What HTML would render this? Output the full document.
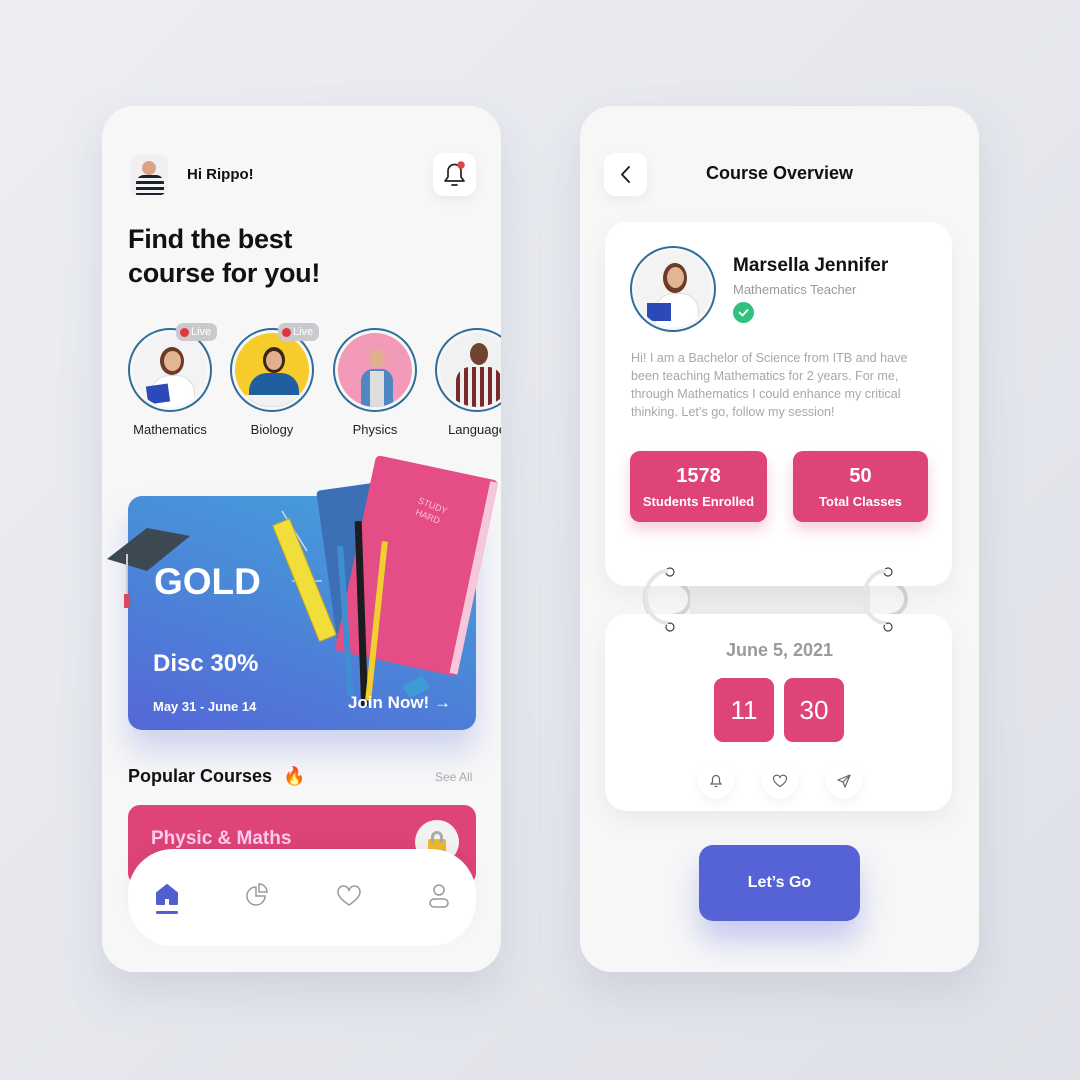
<!DOCTYPE html>
<html><head><meta charset="utf-8"><style>
*{margin:0;padding:0;box-sizing:border-box}
body{width:1080px;height:1080px;background:linear-gradient(135deg,#eceef3,#dfe1e8);font-family:"Liberation Sans",sans-serif;position:relative;overflow:hidden;color:#111}
.abs{position:absolute}
.phone{position:absolute;top:106px;width:399px;height:866px;background:#f7f7f8;border-radius:32px;box-shadow:0 20px 40px rgba(150,155,175,.25);overflow:hidden}
.circ{position:absolute;width:84px;height:84px;border-radius:50%;border:2px solid #2f6e9a;padding:3px;background:#f7f7f8}
.circ .in{width:100%;height:100%;border-radius:50%;overflow:hidden;position:relative}
.lbl{position:absolute;font-size:13px;color:#222;text-align:center;width:100px}
.live{position:absolute;background:#c9cacd;color:#fff;font-size:11px;border-radius:7px;padding:3px 6px 3px 4px;display:flex;align-items:center;gap:2px}
.live i{width:9px;height:9px;border-radius:50%;background:#e2363f;display:inline-block}
.stat{position:absolute;background:#de4478;border-radius:10px;color:#fff;text-align:center;box-shadow:0 8px 14px rgba(222,68,120,.25)}
.stat b{display:block;font-size:20px;margin-top:14px}
.stat span{font-size:13px;font-weight:bold;display:block;margin-top:6px}
.tbox{position:absolute;width:60px;height:64px;background:#de4478;border-radius:9px;color:#fff;font-size:26px;text-align:center;line-height:64px}
.ib{position:absolute;width:36px;height:36px;border-radius:50%;background:#fff;box-shadow:0 4px 10px rgba(0,0,0,.05);display:flex;align-items:center;justify-content:center}
</style></head><body>

<!-- LEFT PHONE -->
<div class="phone" style="left:102px">
  <div class="abs" style="left:28px;top:49px;width:38px;height:40px;border-radius:8px;background:#f0f0f2;overflow:hidden">
    <div class="abs" style="left:12px;top:6px;width:14px;height:14px;border-radius:50%;background:#d9a584"></div>
    <div class="abs" style="left:6px;top:20px;width:28px;height:20px;border-radius:8px 8px 0 0;background:repeating-linear-gradient(#1e2230 0 3px,#f4f4f4 3px 6px)"></div>
  </div>
  <div class="abs" style="left:85px;top:60px;font-size:15px;font-weight:bold">Hi Rippo!</div>
  <div class="abs" style="left:331px;top:47px;width:43px;height:43px;border-radius:11px;background:#fff;box-shadow:0 4px 12px rgba(0,0,0,.06)">
    <svg width="43" height="43" viewBox="0 0 43 43"><path d="M12 28h19l-3-4v-6a6.5 6.5 0 0 0-13 0v6z" fill="none" stroke="#222" stroke-width="1.7" stroke-linejoin="round"/><path d="M19 32h5" stroke="#222" stroke-width="1.7" stroke-linecap="round"/><circle cx="28" cy="12" r="3.8" fill="#e2434b"/></svg>
  </div>
  <div class="abs" style="left:26px;top:116px;font-size:27px;font-weight:bold;line-height:34px;letter-spacing:-.3px">Find the best<br>course for you!</div>

  <div class="circ" style="left:26px;top:222px"><div class="in" style="background:#f3f3f3"><div class="abs" style="left:27px;top:14px;width:24px;height:28px;border-radius:50%;background:#6b3b25"></div><div class="abs" style="left:31px;top:18px;width:17px;height:20px;border-radius:50%;background:#e3b595"></div><div class="abs" style="left:18px;top:42px;width:44px;height:40px;border-radius:18px 18px 0 0;background:#fff;box-shadow:inset 0 0 0 1px #ddd"></div><div class="abs" style="left:14px;top:52px;width:22px;height:18px;background:#2c49b8;transform:rotate(-8deg)"></div></div></div>
  <div class="live" style="left:74px;top:217px"><i></i>Live</div>
  <div class="lbl" style="left:18px;top:316px">Mathematics</div>

  <div class="circ" style="left:128px;top:222px"><div class="in" style="background:#f5cc2c"><div class="abs" style="left:28px;top:14px;width:22px;height:26px;border-radius:50%;background:#3b2418"></div><div class="abs" style="left:31px;top:18px;width:16px;height:19px;border-radius:50%;background:#e2b08e"></div><div class="abs" style="left:14px;top:40px;width:50px;height:40px;border-radius:18px 18px 0 0;background:#1f5fa0"></div><div class="abs" style="left:0;top:62px;width:80px;height:20px;background:#f1f1f1"></div></div></div>
  <div class="live" style="left:176px;top:217px"><i></i>Live</div>
  <div class="lbl" style="left:120px;top:316px">Biology</div>

  <div class="circ" style="left:231px;top:222px"><div class="in" style="background:#f39ab8"><div class="abs" style="left:31px;top:16px;width:16px;height:19px;border-radius:50%;background:#e0b091"></div><div class="abs" style="left:23px;top:36px;width:32px;height:44px;border-radius:12px 12px 0 0;background:#4f86c4"></div><div class="abs" style="left:32px;top:38px;width:14px;height:40px;background:#ddd"></div></div></div>
  <div class="lbl" style="left:223px;top:316px">Physics</div>

  <div class="circ" style="left:333px;top:222px"><div class="in" style="background:#f1f1f1"><div class="abs" style="left:30px;top:10px;width:18px;height:22px;border-radius:50%;background:#6e4330"></div><div class="abs" style="left:16px;top:34px;width:46px;height:46px;border-radius:14px 14px 0 0;background:repeating-linear-gradient(90deg,#7a2a2a 0 4px,#eee 4px 8px)"></div></div></div>
  <div class="lbl" style="left:325px;top:316px">Language</div>

  <!-- banner -->
  <div class="abs" style="left:26px;top:390px;width:348px;height:234px;border-radius:14px;background:linear-gradient(20deg,#5567d8 0%,#4a8ad8 55%,#44a3dd 100%);box-shadow:0 22px 30px rgba(90,110,210,.25)"></div>
  <svg class="abs" style="left:0;top:350px" width="399" height="330" viewBox="0 0 399 330">
    <path d="M180 55 L205 95 M240 50 L232 110 M190 125 h30" stroke="#cfe3f7" stroke-width="1.3" fill="none"/>
    <rect x="225" y="30" width="60" height="160" rx="4" fill="#3d6fb5" transform="rotate(-8 255 110)"/>
    <g transform="rotate(12 315 120)"><rect x="250" y="10" width="125" height="200" rx="5" fill="#e44d85"/><rect x="367" y="12" width="8" height="196" fill="#f4c8d8"/><text x="300" y="50" font-size="9" fill="#f7c3d6" font-family="Liberation Sans" transform="rotate(10 310 50)">STUDY</text><text x="300" y="62" font-size="9" fill="#f7c3d6" font-family="Liberation Sans" transform="rotate(10 310 62)">HARD</text></g>
    <g transform="rotate(-22 210 140)"><rect x="200" y="60" width="18" height="125" fill="#f2de3a" stroke="#c9a81c"/></g>
    <rect x="240" y="90" width="6" height="150" fill="#3f8fd0" transform="rotate(-4 243 160)"/>
    <rect x="256" y="65" width="7" height="185" fill="#1c1c1c" transform="rotate(-2 260 160)"/>
    <rect x="272" y="85" width="6" height="160" fill="#f2cf2e" transform="rotate(6 275 160)"/>
    <path d="M300 230 l20 -10 l8 12 l-20 10z" fill="#3f9bd4"/>
    <path d="M5 103 L45 72 L88 80 L45 115 Z" fill="#3c4852"/>
    <path d="M25 98 L25 140" stroke="#ccc" stroke-width="2"/><rect x="22" y="138" width="6" height="14" fill="#d94a5f"/>
  </svg>
  <div class="abs" style="left:52px;top:455px;font-size:37px;font-weight:bold;color:#fff">GOLD</div>
  <div class="abs" style="left:51px;top:544px;font-size:24px;font-weight:bold;color:#fff">Disc 30%</div>
  <div class="abs" style="left:51px;top:593px;font-size:13px;font-weight:bold;color:#fff">May 31 - June 14</div>
  <div class="abs" style="left:246px;top:587px;font-size:17px;font-weight:bold;color:#fff">Join Now! →</div>

  <div class="abs" style="left:26px;top:660px;font-size:18px;font-weight:bold">Popular Courses <span style="margin-left:6px">🔥</span></div>
  <div class="abs" style="left:333px;top:664px;font-size:12px;color:#aaa">See All</div>
  <div class="abs" style="left:26px;top:699px;width:348px;height:80px;border-radius:12px;background:#de4478"></div>
  <div class="abs" style="left:49px;top:722px;font-size:19px;font-weight:bold;color:#fce">Physic &amp; Maths</div>
  <div class="abs" style="left:313px;top:714px;width:44px;height:44px;border-radius:50%;background:#f3f3f3"><div class="abs" style="left:13px;top:19px;width:18px;height:14px;background:#f0b92e;border-radius:2px"></div><div class="abs" style="left:16px;top:11px;width:12px;height:12px;border:3px solid #aaa;border-bottom:none;border-radius:6px 6px 0 0"></div></div>
  <div class="abs" style="left:26px;top:743px;width:348px;height:97px;border-radius:45px;background:#fff;box-shadow:0 -6px 16px rgba(0,0,0,.04)">
    <svg class="abs" style="left:26px;top:33px" width="26" height="32" viewBox="0 0 26 32"><path d="M3 11 L13 3 L23 11 V22 H16 V16 H10 V22 H3Z" fill="#4f5fcf" stroke="#4f5fcf" stroke-width="2" stroke-linejoin="round"/><rect x="2" y="29" width="22" height="3" rx="1.5" fill="#4f5fcf"/></svg>
    <svg class="abs" style="left:117px;top:33px" width="26" height="26" viewBox="0 0 26 26" fill="none" stroke="#999" stroke-width="1.5"><path d="M11 5a9 9 0 1 0 9 9h-9z"/><path d="M14 2a8 8 0 0 1 8 8h-8z"/></svg>
    <svg class="abs" style="left:208px;top:35px" width="26" height="24" viewBox="0 0 26 24" fill="none" stroke="#999" stroke-width="1.5"><path d="M13 21C4 15 2 11 2 8a5.5 5.5 0 0 1 11-1 5.5 5.5 0 0 1 11 1c0 3-2 7-11 13z"/></svg>
    <svg class="abs" style="left:299px;top:33px" width="24" height="28" viewBox="0 0 24 28" fill="none" stroke="#999" stroke-width="1.5"><circle cx="12" cy="8" r="5"/><rect x="3" y="17" width="18" height="8" rx="4"/></svg>
  </div>
</div>

<!-- RIGHT PHONE -->
<div class="phone" style="left:580px">
  <div class="abs" style="left:24px;top:47px;width:43px;height:43px;border-radius:11px;background:#fff;box-shadow:0 4px 12px rgba(0,0,0,.05)">
    <svg width="43" height="43"><path d="M25 14 L18 21.5 L25 29" fill="none" stroke="#222" stroke-width="2" stroke-linecap="round" stroke-linejoin="round"/></svg>
  </div>
  <div class="abs" style="left:0;top:57px;width:399px;text-align:center;font-size:18px;font-weight:bold">Course Overview</div>

  <!-- rings -->
  <svg class="abs" style="left:50px;top:455px" width="300" height="75" viewBox="0 0 300 75" fill="none"><path d="M40 10 a24 26 0 0 0 0 54" stroke="#ddd" stroke-width="4"/><path d="M44 22 a14 14 0 0 1 0 32" stroke="#d5d5d8" stroke-width="4"/><path d="M256 10 a24 26 0 0 0 0 54" stroke="#ddd" stroke-width="4"/><path d="M260 22 a14 14 0 0 1 0 32" stroke="#d5d5d8" stroke-width="4"/><rect x="60" y="20" width="180" height="34" fill="#ececee"/></svg>

  <div class="abs" style="left:25px;top:116px;width:347px;height:364px;border-radius:22px;background:#fff;box-shadow:0 10px 24px rgba(0,0,0,.05)"></div>
  <div class="circ" style="left:50px;top:140px;width:86px;height:86px"><div class="in" style="background:#f3f3f3"><div class="abs" style="left:28px;top:12px;width:24px;height:30px;border-radius:50%;background:#6b3b25"></div><div class="abs" style="left:32px;top:16px;width:17px;height:21px;border-radius:50%;background:#e3b595"></div><div class="abs" style="left:20px;top:42px;width:44px;height:40px;border-radius:18px 18px 0 0;background:#fff;box-shadow:inset 0 0 0 1px #ddd"></div><div class="abs" style="left:12px;top:52px;width:24px;height:18px;background:#2c49b8"></div></div></div>
  <div class="abs" style="left:153px;top:149px;font-size:19px;font-weight:bold">Marsella Jennifer</div>
  <div class="abs" style="left:153px;top:176px;font-size:13px;color:#999">Mathematics Teacher</div>
  <div class="abs" style="left:153px;top:196px;width:21px;height:21px;border-radius:50%;background:#2ec27e"><svg width="21" height="21"><path d="M6.5 10.5l3 3 5-5.5" stroke="#fff" stroke-width="1.8" fill="none" stroke-linecap="round"/></svg></div>
  <div class="abs" style="left:51px;top:243px;width:300px;font-size:12.6px;color:#a8a8ab;line-height:18px">Hi! I am a Bachelor of Science from ITB and have been teaching Mathematics for 2 years. For me, through Mathematics I could enhance my critical thinking. Let’s go, follow my session!</div>
  <div class="stat" style="left:50px;top:345px;width:137px;height:71px"><b>1578</b><span>Students Enrolled</span></div>
  <div class="stat" style="left:213px;top:345px;width:135px;height:71px"><b>50</b><span>Total Classes</span></div>

  <div class="abs" style="left:25px;top:508px;width:347px;height:197px;border-radius:22px;background:#fff;box-shadow:0 10px 24px rgba(0,0,0,.05)"></div>
  <svg class="abs" style="left:80px;top:460px" width="240" height="70" fill="none" stroke="#444" stroke-width="1.2"><circle cx="10" cy="6" r="4"/><circle cx="10" cy="61" r="4"/><circle cx="228" cy="6" r="4"/><circle cx="228" cy="61" r="4"/></svg>
  <svg class="abs" style="left:58px;top:455px" width="290" height="70" fill="none" stroke="#e6e6e8" stroke-width="4"><path d="M30 10 a22 26 0 0 0 0 52"/><path d="M248 10 a22 26 0 0 0 0 52"/></svg>
  <div class="abs" style="left:0;top:534px;width:399px;text-align:center;font-size:18px;font-weight:bold;color:#9a9a9d">June 5, 2021</div>
  <div class="tbox" style="left:134px;top:572px">11</div>
  <div class="tbox" style="left:204px;top:572px">30</div>
  <div class="ib" style="left:118px;top:657px"><svg width="16" height="16" viewBox="0 0 16 16" fill="none" stroke="#666" stroke-width="1.2"><path d="M3 11h10l-1.5-2V6a3.5 3.5 0 0 0-7 0v3z"/><path d="M6.5 13.5h3"/></svg></div>
  <div class="ib" style="left:182px;top:657px"><svg width="16" height="16" viewBox="0 0 16 16" fill="none" stroke="#666" stroke-width="1.2"><path d="M8 13.5C2.5 10 1.5 7.5 1.5 5.5a3.3 3.3 0 0 1 6.5-.8 3.3 3.3 0 0 1 6.5.8c0 2-1 4.5-6.5 8z"/></svg></div>
  <div class="ib" style="left:246px;top:657px"><svg width="16" height="16" viewBox="0 0 16 16" fill="none" stroke="#666" stroke-width="1.2" stroke-linejoin="round"><path d="M14 2L2 7l5 2 2 5z"/><path d="M7 9l7-7"/></svg></div>

  <div class="abs" style="left:119px;top:739px;width:161px;height:76px;border-radius:14px;background:#5563d6;box-shadow:0 20px 30px rgba(85,99,214,.3);color:#fff;font-size:16px;font-weight:bold;text-align:center;line-height:76px">Let’s Go</div>
</div>
</body></html>
